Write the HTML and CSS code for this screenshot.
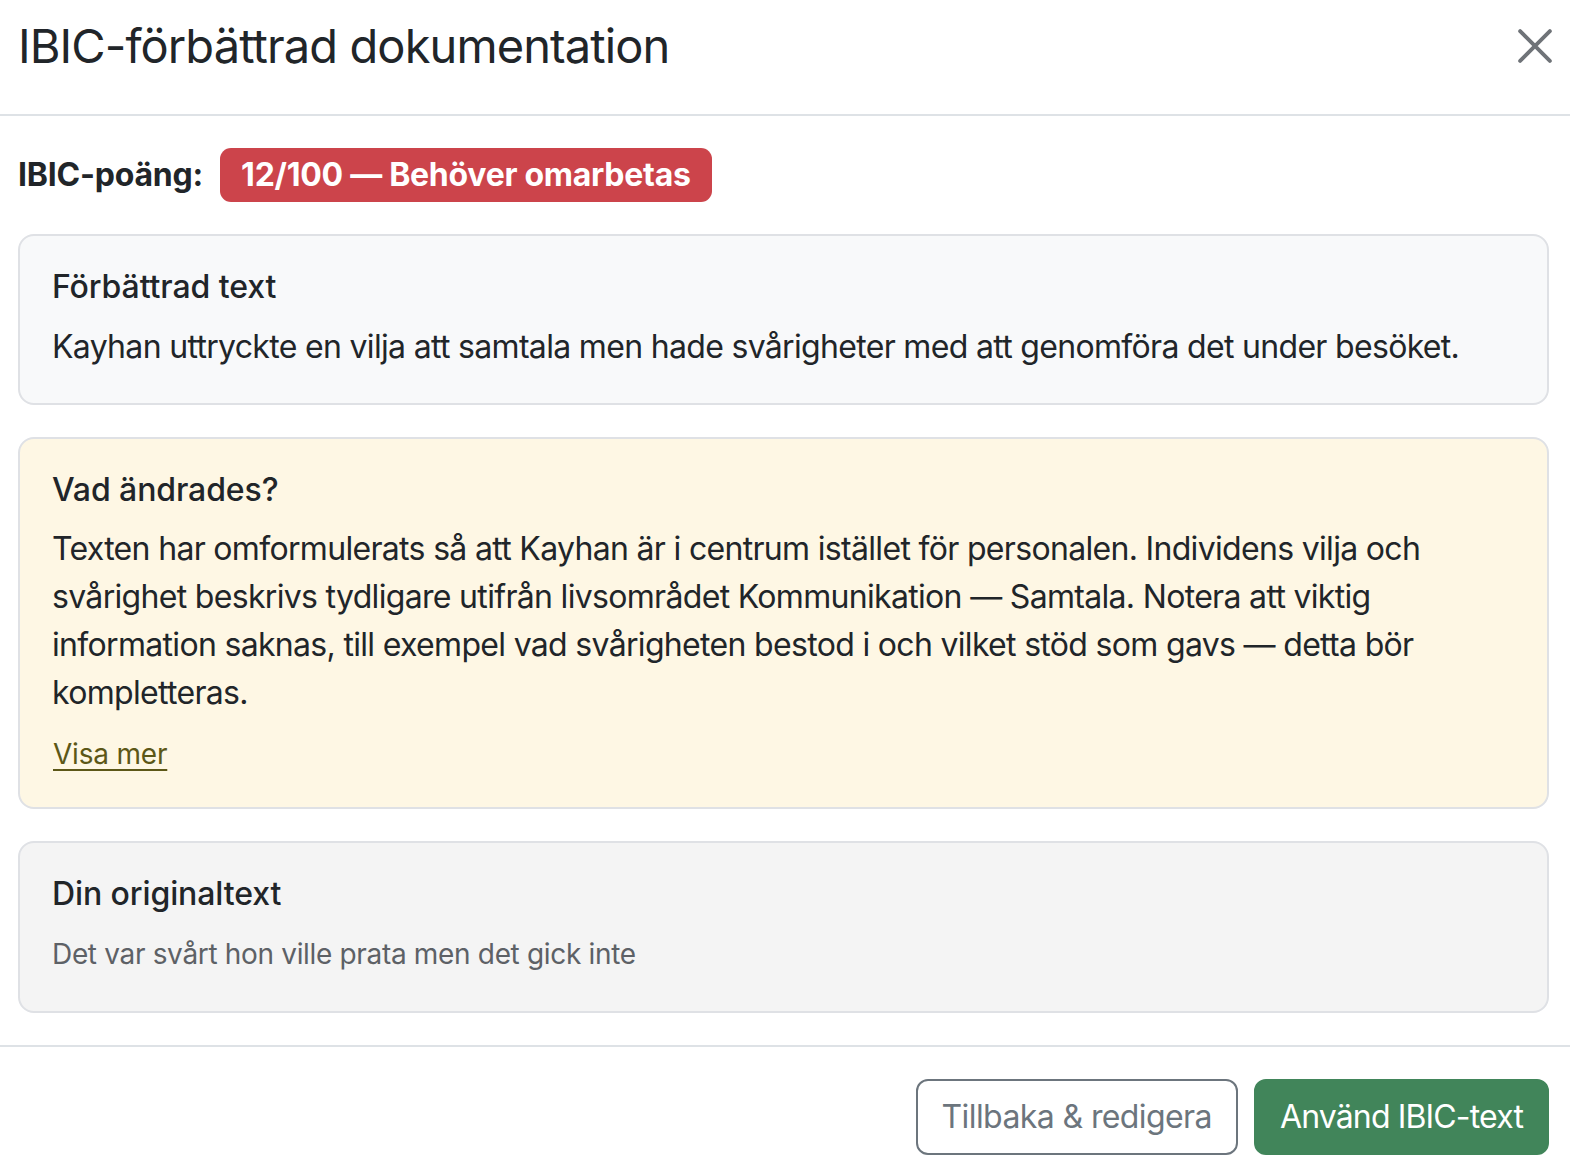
FILE: index.html
```html
<!DOCTYPE html>
<html lang="sv">
<head>
<meta charset="utf-8">
<title>IBIC-förbättrad dokumentation</title>
<link rel="stylesheet" href="styles.css">
</head>
<body>
<div class="modal">
  <header class="modal-header">
    <h4 class="modal-title">IBIC-förbättrad dokumentation</h4>
    <button class="btn-close" aria-label="Stäng">
      <svg viewBox="0 0 32 32" width="34" height="34"><path d="M2 2 L30 30 M30 2 L2 30" stroke="#6f7378" stroke-width="3.6" stroke-linecap="round" fill="none"/></svg>
    </button>
  </header>
  <main class="modal-body">
    <div class="score-row">
      <strong class="score-label">IBIC-poäng:</strong>
      <span class="badge">12/100 — Behöver omarbetas</span>
    </div>
    <section class="card card-light">
      <h6 class="card-title">Förbättrad text</h6>
      <p class="card-text">Kayhan uttryckte en vilja att samtala men hade svårigheter med att genomföra det under besöket.</p>
    </section>
    <section class="card card-warning">
      <h6 class="card-title">Vad ändrades?</h6>
      <p class="card-text">Texten har omformulerats så att Kayhan är i centrum istället för personalen. Individens vilja och svårighet beskrivs tydligare utifrån livsområdet Kommunikation — Samtala. Notera att viktig information saknas, till exempel vad svårigheten bestod i och vilket stöd som gavs — detta bör kompletteras.</p>
      <a class="more-link" href="#">Visa mer</a>
    </section>
    <section class="card card-gray">
      <h6 class="card-title">Din originaltext</h6>
      <p class="card-text original">Det var svårt hon ville prata men det gick inte</p>
    </section>
  </main>
  <footer class="modal-footer">
    <button class="btn btn-outline">Tillbaka &amp; redigera</button>
    <button class="btn btn-success">Använd IBIC-text</button>
  </footer>
</div>
</body>
</html>
```
FILE: styles.css
```css
* { box-sizing: border-box; }
html, body { margin: 0; padding: 0; background: #fff; }
body {
  font-family: Inter, "Noto Sans", "Liberation Sans", sans-serif;
  color: #212529;
  font-size: 32px;
  line-height: 1.5;
  width: 1570px;
  height: 1174px;
  overflow: hidden;
}
.modal { width: 1570px; }
.modal-header {
  display: flex;
  align-items: center;
  justify-content: space-between;
  padding: 18px 18px 40px 18px;
  border-bottom: 2px solid #dee2e6;
}
.modal-title {
  margin: 0;
  font-size: 47px;
  font-weight: 400;
  line-height: 1.2;
  letter-spacing: -0.9px;
}
.btn-close {
  border: 0;
  background: transparent;
  padding: 0;
  width: 34px;
  height: 34px;
  cursor: pointer;
}
.btn-close svg { display: block; }
.modal-body { padding: 32px 21px 32px 18px; }
.score-row {
  display: flex;
  align-items: center;
  gap: 17px;
  margin-bottom: 32px;
}
.score-label { font-weight: 700; font-size: 32px; letter-spacing: -0.2px; }
.badge {
  display: inline-block;
  background: #cc444b;
  color: #fff;
  font-weight: 700;
  font-size: 32px;
  line-height: 1;
  padding: 11px 21px;
  border-radius: 11px;
  letter-spacing: -0.27px;
}
.card {
  border: 2px solid #dfe1e5;
  border-radius: 16px;
  padding: 32px 32px;
  margin-bottom: 32px;
}
.card:last-child { margin-bottom: 0; }
.card-light { background: #f8f9fa; }
.card-warning { background: #fef7e4; }
.card-gray { background: #f4f4f4; }
.card-title {
  margin: 0 0 16px;
  font-size: 32px;
  font-weight: 500;
  line-height: 1.2;
  letter-spacing: -0.1px;
}
.card-text {
  margin: 0;
  letter-spacing: -0.68px;
}
.card-warning .card-text { margin-bottom: 16px; }
.more-link {
  display: block;
  font-size: 28px;
  line-height: 42px;
  color: #5c5717;
  text-decoration: underline;
  text-underline-offset: 5px;
  letter-spacing: -0.2px;
  margin-left: 1px;
}
.original {
  font-size: 28px;
  line-height: 49px;
  color: #5d6166;
  letter-spacing: -0.33px;
}
.modal-footer {
  display: flex;
  justify-content: flex-end;
  align-items: center;
  gap: 16px;
  padding: 32px 21px 24px 18px;
  border-top: 2px solid #dee2e6;
}
.btn {
  font-family: Inter, "Noto Sans", "Liberation Sans", sans-serif;
  font-size: 32px;
  line-height: 48px;
  padding: 12px 24px;
  border-radius: 12px;
  border: 2px solid transparent;
  cursor: pointer;
}
.btn-outline {
  background: #fff;
  color: #6c757d;
  border-color: #6c757d;
  letter-spacing: -0.6px;
}
.btn-success {
  background: #41855a;
  border-color: #41855a;
  color: #fff;
  letter-spacing: -0.85px;
}
```
